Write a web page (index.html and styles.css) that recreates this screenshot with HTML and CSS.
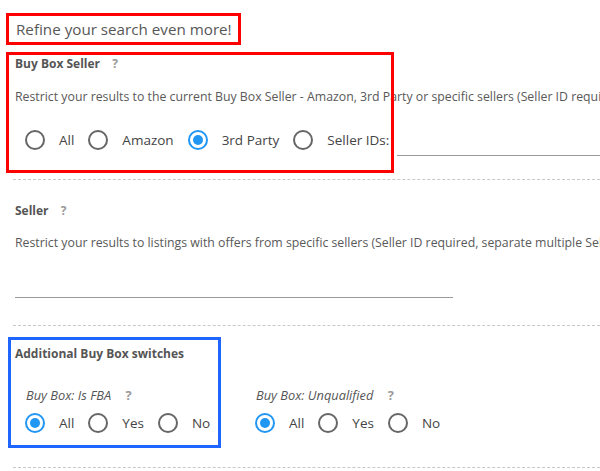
FILE: index.html
```html
<!DOCTYPE html>
<html>
<head>
<meta charset="utf-8">
<link rel="stylesheet" href="styles.css">
</head>
<body>
<div class="page">
  <div class="hdr">Refine your search even more!</div>

  <div class="section s1">
    <div class="title">Buy Box Seller <span class="q">?</span></div>
    <div class="desc">Restrict your results to the current Buy Box Seller - Amazon, 3rd Party or specific sellers (Seller ID required, separate multiple Seller IDs with commas).</div>
    <div class="radios">
      <label class="opt"><span class="rb"></span><span class="lbl">All</span></label>
      <label class="opt"><span class="rb"></span><span class="lbl">Amazon</span></label>
      <label class="opt"><span class="rb on"></span><span class="lbl">3rd Party</span></label>
      <label class="opt"><span class="rb"></span><span class="lbl">Seller IDs:</span></label>
      <span class="line ids"></span>
    </div>
  </div>

  <div class="section s2">
    <div class="title">Seller <span class="q">?</span></div>
    <div class="desc">Restrict your results to listings with offers from specific sellers (Seller ID required, separate multiple Seller IDs with commas).</div>
    <div class="line seller"></div>
  </div>

  <div class="section s3">
    <div class="title">Additional Buy Box switches</div>
    <div class="groups">
      <div class="group">
        <div class="sub">Buy Box: Is FBA <span class="q">?</span></div>
        <div class="radios">
          <label class="opt"><span class="rb on"></span><span class="lbl">All</span></label>
          <label class="opt"><span class="rb"></span><span class="lbl">Yes</span></label>
          <label class="opt"><span class="rb"></span><span class="lbl">No</span></label>
        </div>
      </div>
      <div class="group">
        <div class="sub">Buy Box: Unqualified <span class="q">?</span></div>
        <div class="radios">
          <label class="opt"><span class="rb on"></span><span class="lbl">All</span></label>
          <label class="opt"><span class="rb"></span><span class="lbl">Yes</span></label>
          <label class="opt"><span class="rb"></span><span class="lbl">No</span></label>
        </div>
      </div>
    </div>
  </div>

  <div class="mark red m1"></div>
  <div class="mark red m2"></div>
  <div class="mark blue m3"></div>
</div>
</body>
</html>
```

FILE: styles.css
```css
html, body {
  margin: 0;
  padding: 0;
  background: #fff;
}
body {
  font-family: "Open Sans", "Noto Sans", sans-serif;
  color: #575757;
  width: 600px;
  height: 471px;
  overflow: hidden;
}
.page {
  position: relative;
  width: 600px;
  height: 471px;
  overflow: hidden;
}
.hdr {
  padding: 19px 0 0 16px;
  line-height: 20px;
  font-size: 15.2px;
  color: #575757;
  white-space: nowrap;
}
.section {
  margin-left: 13px;
  padding-left: 2px;
  border-bottom: 1px dashed #c8c8c8;
  white-space: nowrap;
}
.title {
  font-weight: bold;
  font-size: 12px;
  line-height: 16px;
  color: #555;
}
.q {
  color: #999;
  margin-left: 9px;
}
.desc {
  font-size: 12.3px;
  line-height: 16px;
  color: #595959;
}
.radios {
  display: flex;
  align-items: center;
  height: 24px;
}
.opt {
  display: flex;
  align-items: center;
  margin-right: 14px;
}
.rb {
  box-sizing: border-box;
  width: 20px;
  height: 20px;
  border: 2px solid #666;
  border-radius: 50%;
  display: flex;
  align-items: center;
  justify-content: center;
}
.rb.on {
  border-color: #2196f3;
}
.rb.on::after {
  content: "";
  width: 10px;
  height: 10px;
  border-radius: 50%;
  background: #2196f3;
}
.lbl {
  margin-left: 14px;
  font-size: 13.5px;
  color: #444;
}
.line {
  display: block;
  border-bottom: 1px solid #9a9a9a;
}
.ids {
  flex: 1;
  align-self: flex-end;
  height: 27px;
  margin-left: -6px;
  margin-right: -200px;
  margin-bottom: -4px;
}

.s1 { padding-top: 17px; padding-bottom: 27px; }
.s1 .desc { margin-top: 17px; }
.s1 .radios { margin-top: 23px; margin-left: 10px; }

.s2 { padding-top: 23px; padding-bottom: 27px; }
.s2 .desc { margin-top: 16px; }
.seller { width: 438px; height: 30px; margin-top: 16px; }

.s3 { padding-top: 20px; padding-bottom: 32px; }
.groups {
  display: flex;
  margin-top: 25px;
  padding-left: 10px;
}
.group { width: 230px; }
.sub {
  font-style: italic;
  font-size: 12.8px;
  line-height: 16px;
  padding-left: 1px;
  color: #555;
}
.sub .q { font-style: normal; font-weight: bold; margin-left: 11px; }
.group .radios { margin-top: 8px; }

.mark {
  position: absolute;
  box-sizing: border-box;
  border: 3px solid;
}
.red { border-color: #ff0000; }
.blue { border-color: #1e66ff; }
.m1 { left: 6px; top: 13px; width: 235px; height: 32px; }
.m2 { left: 6px; top: 52px; width: 388px; height: 121px; }
.m3 { left: 8px; top: 337px; width: 213px; height: 111px; }
```
